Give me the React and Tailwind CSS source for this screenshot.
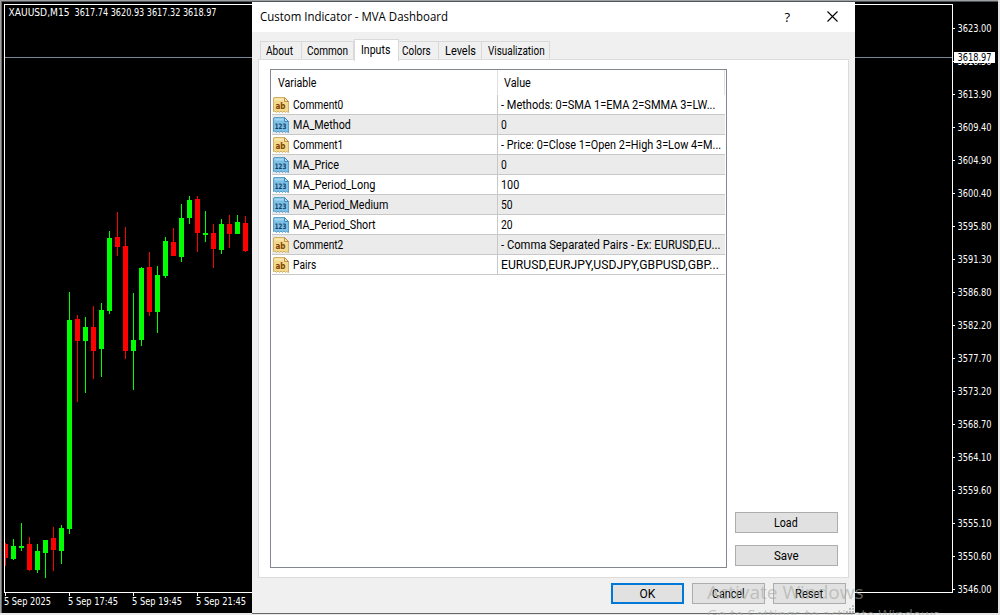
import { useLayoutEffect, useRef } from "react";

const GREEN = "#00ff00";
const RED = "#ff0000";

// [center x, high, body top, body bottom, low, bullish]
const candles = [
  [5, 543, 544, 558, 566, 0],
  [13, 539, 546, 559, 560, 1],
  [21, 523, 546, 548, 551, 1],
  [29, 537, 544, 570, 571, 0],
  [37, 544, 551, 570, 573, 1],
  [45, 540, 540, 553, 578, 1],
  [53, 527, 538, 550, 571, 0],
  [61, 525, 528, 551, 564, 1],
  [69, 292, 320, 529, 534, 1],
  [77, 315, 319, 341, 402, 0],
  [85, 317, 327, 341, 393, 1],
  [93, 306, 327, 351, 379, 0],
  [101, 303, 310, 349, 377, 1],
  [109, 231, 238, 311, 314, 1],
  [117, 212, 237, 247, 256, 0],
  [125, 227, 246, 351, 359, 0],
  [133, 293, 340, 351, 390, 1],
  [141, 267, 268, 340, 346, 1],
  [149, 252, 267, 312, 316, 0],
  [157, 266, 275, 312, 333, 1],
  [165, 237, 241, 276, 278, 1],
  [173, 228, 242, 256, 256, 0],
  [181, 204, 218, 257, 262, 1],
  [189, 196, 200, 218, 224, 1],
  [197, 196, 199, 233, 252, 0],
  [205, 211, 233, 235, 242, 1],
  [213, 224, 233, 249, 268, 0],
  [221, 219, 224, 250, 254, 1],
  [229, 215, 224, 234, 248, 0],
  [237, 215, 222, 234, 234, 1],
  [245, 216, 223, 251, 252, 0],
];

const prices = [
  "3623.00", "3618.50", "3613.90", "3609.40", "3604.90", "3600.40",
  "3595.80", "3591.30", "3586.80", "3582.20", "3577.70", "3573.20",
  "3568.70", "3564.10", "3559.60", "3555.10", "3550.60", "3546.00",
];

const times = [
  ["5 Sep 2025", 5, 47],
  ["5 Sep 17:45", 69, 50],
  ["5 Sep 19:45", 133, 50],
  ["5 Sep 21:45", 197, 50],
];

const tabs = [
  { label: "About", w: 27, box: "w-[42px] pl-[5px]" },
  { label: "Common", w: 41, box: "w-[52px] pl-[5px]" },
  { label: "Inputs", w: 29, box: "w-[45px] pl-[6px]", active: true },
  { label: "Colors", w: 29, box: "w-[40px] pl-[3px]" },
  { label: "Levels", w: 31, box: "w-[43px] pl-[6px]" },
  { label: "Visualization", w: 57, box: "w-[68px] pl-[6px]" },
];

const rows = [
  ["ab", "Comment0", 50, "- Methods: 0=SMA 1=EMA 2=SMMA 3=LW...", 214],
  ["123", "MA_Method", 58, "0", 6],
  ["ab", "Comment1", 50, "- Price: 0=Close 1=Open 2=High 3=Low 4=M...", 220],
  ["123", "MA_Price", 46, "0", 6],
  ["123", "MA_Period_Long", 82, "100", 18],
  ["123", "MA_Period_Medium", 95, "50", 12],
  ["123", "MA_Period_Short", 83, "20", 12],
  ["ab", "Comment2", 50, "- Comma Separated Pairs - Ex: EURUSD,EU...", 219],
  ["ab", "Pairs", 23, "EURUSD,EURJPY,USDJPY,GBPUSD,GBP...", 218],
];

// text condensed or stretched to an exact pixel width
function Fit({ w, children }) {
  const ref = useRef(null);
  useLayoutEffect(() => {
    const el = ref.current;
    el.style.transform = `scaleX(${w / el.offsetWidth})`;
  }, [w, children]);
  return (
    <span className="block" style={{ width: w }}>
      <span ref={ref} className="inline-block origin-left whitespace-pre">
        {children}
      </span>
    </span>
  );
}

function ChartText({ x, y, w, fill = "#ffffff", children }) {
  return (
    <text x={x} y={y} fill={fill} textLength={w} lengthAdjust="spacingAndGlyphs">
      {children}
    </text>
  );
}

function Chart() {
  return (
    <svg width="1000" height="615" className="block font-['DejaVu_Sans_Condensed','Noto_Sans',sans-serif] text-[10.5px]" shapeRendering="crispEdges">
      <rect width="1000" height="615" fill="#000000" />
      <rect width="1000" height="1" fill="#a0a0a0" />
      <rect y="1" width="1000" height="1" fill="#50555a" />
      <rect width="1" height="615" fill="#a0a0a0" />
      <rect x="1" y="1" width="1" height="613" fill="#696969" />
      <rect x="998" width="2" height="615" fill="#e3e3e3" />
      <rect y="613" width="1000" height="2" fill="#e8e8e8" />

      <rect x="4" y="57" width="949" height="1" fill="#778899" />
      {candles.map(([x, high, top, bottom, low, up]) => (
        <g key={x} fill={up ? GREEN : RED}>
          <rect x={x} y={high} width="1" height={low - high} />
          <rect x={x === 5 ? 5 : x - 2} y={top} width={x === 5 ? 3 : 5} height={bottom - top} />
        </g>
      ))}

      <path d="M4.5 593V4.5H952.5V592.5H4" fill="none" stroke="#ffffff" />
      {times.map(([label, x, w]) => (
        <g key={label}>
          <rect x={x} y="593" width="1" height="3" fill="#ffffff" />
          <ChartText x={x - 1} y="605" w={w}>{label}</ChartText>
        </g>
      ))}
      {prices.map((p, i) => (
        <g key={p}>
          <rect x="953" y={28 + i * 33} width="2" height="1" fill="#ffffff" />
          <ChartText x="957.5" y={32 + i * 33} w="34">{p}</ChartText>
        </g>
      ))}
      <rect x="954" y="52" width="41" height="11" fill="#ffffff" />
      <ChartText x="957.5" y="61" w="34" fill="#000000">3618.97</ChartText>
      <ChartText x="8.5" y="16" w="61">XAUUSD,M15</ChartText>
      <ChartText x="74.5" y="16" w="142">3617.74 3620.93 3617.32 3618.97</ChartText>
    </svg>
  );
}

function TypeIcon({ type }) {
  const ab = type === "ab";
  return (
    <svg width="16" height="16" viewBox="0 0 16 16" className="shrink-0">
      <path
        d="M1 .5H11.5L15.5 4.5V15.5L13.5 14.5L12.5 15.5L11 14L9.5 15.5L8 14L6.5 15.5L5 14L3.5 15.5L2 14L.5 14.5V1Z"
        fill={ab ? "#f3d98e" : "#7dbfe6"}
        stroke={ab ? "#d2ae62" : "#5b9fc8"}
      />
      <path d="M1.5 1.5H11V3.5H1.5Z" fill={ab ? "#f9e8b0" : "#a4d6f1"} />
      <path d="M11.5 .5V4.5H15.5Z" fill={ab ? "#fbe9b4" : "#b9e2f6"} stroke={ab ? "#c18f45" : "#4688b4"} />
      <text
        x="7.5"
        y={ab ? 12 : 11.5}
        textAnchor="middle"
        textLength={ab ? 10 : 11.5}
        lengthAdjust="spacingAndGlyphs"
        fill={ab ? "#7d4100" : "#123f63"}
        className={ab ? "font-['DejaVu_Sans'] text-[9.5px] font-bold" : "font-['DejaVu_Sans'] text-[7.5px] font-bold"}
      >
        {type}
      </text>
    </svg>
  );
}

function Button({ label, w, className = "", primary }) {
  return (
    <div
      className={`flex h-[21px] items-center justify-center bg-[#e1e1e1] ${
        primary ? "border-2 border-[#0078d7]" : "border border-[#adadad] pr-px"
      } ${className}`}
    >
      <Fit w={w}>{label}</Fit>
    </div>
  );
}

function Tabs() {
  return (
    <div className="flex h-[21px] items-end pl-[8px]">
      {tabs.map((t) => (
        <div
          key={t.label}
          className={
            t.active
              ? `relative -mb-px h-[22px] border border-b-0 border-[#d9d9d9] bg-white pt-[2px] ${t.box}`
              : `h-[19px] border border-b-0 border-l-0 border-[#d9d9d9] pt-px first:border-l ${t.box}`
          }
        >
          <Fit w={t.w}>{t.label}</Fit>
        </div>
      ))}
    </div>
  );
}

function VariableList() {
  return (
    <div className="h-[499px] w-[457px] border border-[#828790] bg-white pr-px pl-px">
      <div className="flex h-[25px]">
        <div className="h-full w-[226px] border-r border-[#e0e0e0] pt-[5px] pl-[6px]">
          <Fit w={38}>Variable</Fit>
        </div>
        <div className="h-full w-[227px] border-r border-[#e0e0e0] pt-[5px] pl-[6px]">
          <Fit w={27}>Value</Fit>
        </div>
      </div>
      {rows.map(([type, name, nameW, value, valueW], i) => (
        <div
          key={name}
          className={`flex h-[20px] border-b border-[#c8c8c8] ${i % 2 ? "bg-[#ebebeb]" : "bg-white"}`}
        >
          <div className="flex w-[226px] items-center gap-[4px] border-r border-[#c8c8c8] pl-px">
            <TypeIcon type={type} />
            <Fit w={nameW}>{name}</Fit>
          </div>
          <div className="flex items-center pl-[3px]">
            <Fit w={valueW}>{value}</Fit>
          </div>
        </div>
      ))}
    </div>
  );
}

function Dialog() {
  return (
    <div className="absolute top-[2px] left-[252px] flex h-[612px] w-[603px] flex-col border-b border-[#686868] bg-[#f0f0f0] font-[Roboto,sans-serif] text-[12px] leading-[16px] text-black">
      <div className="flex h-[30px] items-center justify-between bg-white pr-[17px] pl-[8px] font-['Open_Sans',sans-serif]">
        <Fit w={188}>Custom Indicator - MVA Dashboard</Fit>
        <div className="flex items-center gap-[37px]">
          <span className="text-[13px] font-medium">?</span>
          <svg width="11" height="11" viewBox="0 0 11 11" className="mt-[-1px]">
            <path d="M.5 .5L10.5 10.5M10.5 .5L.5 10.5" stroke="#000000" strokeWidth="1.1" />
          </svg>
        </div>
      </div>
      <div className="pt-[7px]">
        <Tabs />
      </div>
      <div className="mr-[6px] ml-[6px] flex h-[519px] shrink-0 -mt-px border border-[#dcdcdc] bg-white pt-[9px] pl-[11px]">
        <VariableList />
        <div className="flex flex-col justify-end gap-[12px] pb-[11px] pl-[8px]">
          <Button label="Load" w={24} className="w-[103px]" />
          <Button label="Save" w={25} className="w-[103px]" />
        </div>
      </div>
      <div className="flex justify-end gap-[8px] pt-[5px] pr-[9px]">
        <Button label="OK" w={16} className="w-[73px]" primary />
        <Button label="Cancel" w={33} className="w-[73px]" />
        <Button label="Reset" w={28} className="w-[73px]" />
      </div>
      <svg width="8" height="8" className="absolute right-px bottom-0" fill="#bcbcbc">
        <path d="M6 0h2v2h-2zM3 3h2v2h-2zM6 3h2v2h-2zM0 6h2v2h-2zM3 6h2v2h-2zM6 6h2v2h-2z" />
      </svg>
    </div>
  );
}

function Watermark() {
  return (
    <div className="absolute top-[579px] left-[707px] h-[36px] w-[260px] overflow-hidden font-['Open_Sans',sans-serif] text-[#a3a8a3]/60">
      <div className="h-[26px] text-[18px] leading-[26px]">
        <Fit w={157}>Activate Windows</Fit>
      </div>
      <div className="text-[14px] leading-[19px]">
        <Fit w={236}>Go to Settings to activate Windows.</Fit>
      </div>
    </div>
  );
}

export default function App() {
  return (
    <div className="relative h-[615px] w-[1000px] overflow-hidden bg-black">
      <Chart />
      <Dialog />
      <Watermark />
    </div>
  );
}
